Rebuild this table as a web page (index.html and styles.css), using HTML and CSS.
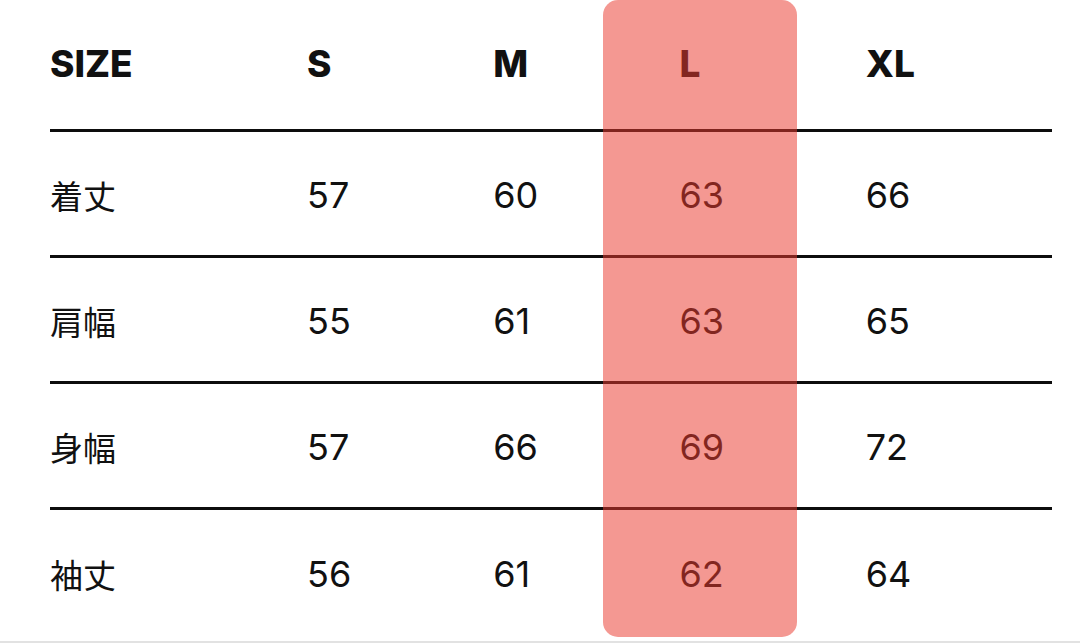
FILE: index.html
```html
<!DOCTYPE html>
<html lang="ja">
<head>
<meta charset="utf-8">
<link rel="stylesheet" href="styles.css">
</head>
<body>
<div class="page">
  <div class="table">
    <div class="row head">
      <div class="cell">SIZE</div>
      <div class="cell">S</div>
      <div class="cell">M</div>
      <div class="cell">L</div>
      <div class="cell">XL</div>
    </div>
    <div class="row">
      <div class="cell label">着丈</div>
      <div class="cell">57</div>
      <div class="cell">60</div>
      <div class="cell">63</div>
      <div class="cell">66</div>
    </div>
    <div class="row">
      <div class="cell label">肩幅</div>
      <div class="cell">55</div>
      <div class="cell">61</div>
      <div class="cell">63</div>
      <div class="cell">65</div>
    </div>
    <div class="row">
      <div class="cell label">身幅</div>
      <div class="cell">57</div>
      <div class="cell">66</div>
      <div class="cell">69</div>
      <div class="cell">72</div>
    </div>
    <div class="row last">
      <div class="cell label">袖丈</div>
      <div class="cell">56</div>
      <div class="cell">61</div>
      <div class="cell">62</div>
      <div class="cell">64</div>
    </div>
    <div class="highlight"></div>
  </div>
</div>
</body>
</html>
```

FILE: styles.css
```css
html, body {
  margin: 0;
  padding: 0;
  background: #ffffff;
}

.page {
  height: 641px;
  border-bottom: 2px solid #e2e2e2;
  overflow: hidden;
}

.table {
  position: relative;
  margin: 0 28px 0 50px;
  font-family: Inter, "Noto Sans CJK JP", sans-serif;
  color: #111111;
}

.row {
  display: grid;
  grid-template-columns: 257px repeat(4, 1fr);
  align-items: center;
  height: 126px;
  padding-top: 4px;
  box-sizing: border-box;
  border-bottom: 3px solid #0d0d0d;
  font-size: 36px;
  font-weight: 400;
}

.row.head {
  height: 132px;
  padding-top: 0;
  font-size: 37px;
  font-weight: 800;
}

.row.last {
  border-bottom: none;
}

.cell {
  line-height: 1.2;
  white-space: nowrap;
}

.cell.label {
  font-family: "Noto Sans CJK JP", sans-serif;
  font-size: 33px;
}

.highlight {
  position: absolute;
  left: 553px;
  top: 0;
  width: 194px;
  height: 637px;
  border-radius: 15px;
  background: rgba(234, 58, 46, 0.52);
  pointer-events: none;
}
```
